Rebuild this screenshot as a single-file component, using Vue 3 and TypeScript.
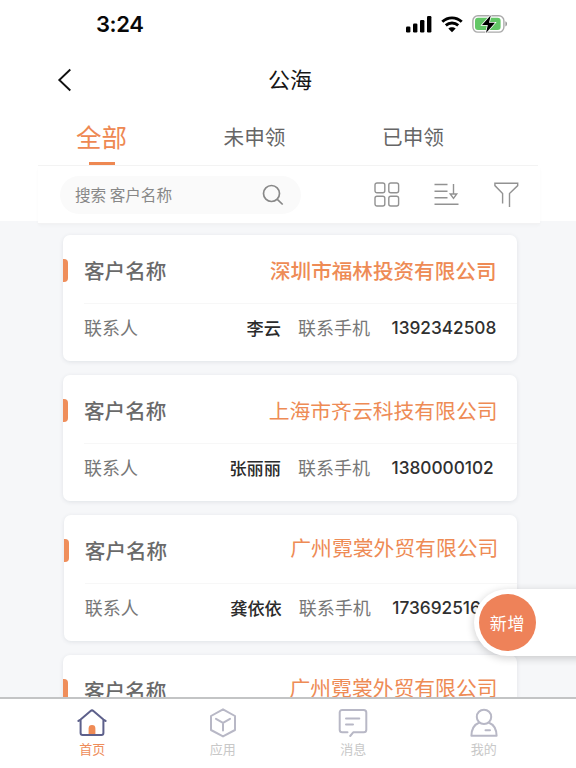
<script setup lang="ts">
import { ref } from 'vue'

interface Customer {
  id: number
  company: string
  contact?: string
  phone?: string
  variant: string
}

const tabs = ['全部', '未申领', '已申领']
const activeTab = ref(0)

const customers: Customer[] = [
  { id: 1, company: '深圳市福林投资有限公司', contact: '李云', phone: '1392342508', variant: 'strong' },
  { id: 2, company: '上海市齐云科技有限公司', contact: '张丽丽', phone: '1380000102', variant: 'medium' },
  { id: 3, company: '广州霓裳外贸有限公司', contact: '龚依依', phone: '173692516', variant: 'raised shifted' },
  { id: 4, company: '广州霓裳外贸有限公司', variant: 'raised' },
]
</script>

<template>
  <div class="screen">
    <header class="status">
      <span class="time">3:24</span>
      <div class="indicators">
        <svg class="signal" width="26" height="17" viewBox="0 0 26 17">
          <rect x="0" y="10.5" width="4.4" height="6" rx="1.2" />
          <rect x="7" y="7.5" width="4.4" height="9" rx="1.2" />
          <rect x="14" y="4" width="4.4" height="12.5" rx="1.2" />
          <rect x="21" y="0" width="4.4" height="16.5" rx="1.2" />
        </svg>
        <svg class="wifi" width="22" height="17" viewBox="0 0 22 17">
          <path d="M1.3 5.8C6.8.5 15.2.5 20.7 5.8" />
          <path d="M4.8 9.4c3.6-3.2 8.8-3.2 12.4 0" />
          <path class="dot" d="M7.3 12.5c2-1.8 5.4-1.8 7.4 0L11 16.3z" />
        </svg>
        <svg class="battery" width="36" height="20" viewBox="0 0 36 20">
          <rect class="shell" x=".9" y="1.7" width="31" height="16.4" rx="5" />
          <rect class="charge" x="3" y="3.8" width="25.6" height="12.2" rx="3" />
          <path class="cap" d="M33.4 7.3c2.2.8 2.2 4.4 0 5.2z" />
          <path class="bolt" d="M18.8 1.2 10 11h5.8l-1.8 8L23 8.7h-6z" />
        </svg>
      </div>
    </header>

    <div class="titlebar">
      <svg class="back" width="16" height="24" viewBox="0 0 16 24"><path d="M14.3 1.5 3.3 12l11 10.5" /></svg>
      <h1>公海</h1>
    </div>

    <div class="head">
      <nav class="tabs">
        <button v-for="(tab, i) in tabs" :key="tab" :class="{ active: i === activeTab }" @click="activeTab = i">
          {{ tab }}
        </button>
      </nav>
      <div class="tools">
        <div class="search">
          <span>搜索 客户名称</span>
          <svg width="22" height="22" viewBox="0 0 22 22"><circle cx="9.5" cy="9.5" r="8" /><path d="m15.3 15.3 5.4 5.2" /></svg>
        </div>
        <svg class="grid" width="26" height="26" viewBox="0 0 26 26">
          <rect x="1" y="1" width="9.8" height="9.8" rx="2" />
          <rect x="14.8" y="1" width="9.8" height="9.8" rx="2" />
          <rect x="1" y="14.2" width="9.8" height="9.8" rx="2" />
          <rect x="14.8" y="14.2" width="9.8" height="9.8" rx="2" />
        </svg>
        <svg class="sort" width="26" height="26" viewBox="0 0 26 26">
          <path d="M.5 2.5h13M.5 9.200h13M.5 15.800h13M.5 22.300h24M19.500 2v10M16.300 12l3.200 4.400 3.200-4.400z" />
        </svg>
        <svg class="filter" width="26" height="26" viewBox="0 0 26 26">
          <path d="M8.600 21.500v-10L.900 3.600V1.200h22.800v2.400l-8.200 7.900V25" />
        </svg>
      </div>
    </div>

    <main class="list">
      <article v-for="c in customers" :key="c.id" class="card" :class="c.variant">
        <div class="row name">
          <i class="mark"></i>
          <span class="caption">客户名称</span>
          <strong class="company">{{ c.company }}</strong>
        </div>
        <div v-if="c.contact" class="row info">
          <span class="label person">联系人</span>
          <span class="contact">{{ c.contact }}</span>
          <span class="label">联系手机</span>
          <span class="phone">{{ c.phone }}</span>
        </div>
      </article>
    </main>

    <div class="drawer"><button class="add">新增</button></div>

    <footer class="bottom">
      <a class="on">
        <svg width="30" height="30" viewBox="0 0 30 30">
          <path class="door" d="M11.600 26v-5.600q0-3.400 3.400-3.400t3.400 3.400V26z" />
          <path class="house" d="M1.400 12.900 3.600 11.600 13.600 3q1.400-1.200 2.800 0l10 8.600 2.200 1.300M3.600 11.800V25q0 2 2 2h18.800q2 0 2-2V11.800" />
        </svg>
        <span>首页</span>
      </a>
      <a>
        <svg width="30" height="30" viewBox="0 0 30 30">
          <path d="M15 1.300 27 8v14L15 28.400 3 22V8zM8 10.800l7 4 7-4M15 14.800v7.600" />
        </svg>
        <span>应用</span>
      </a>
      <a>
        <svg width="30" height="30" viewBox="0 0 30 30">
          <path d="M9.500 24.300H4.300q-2.600 0-2.600-2.600V4.600Q1.700 2 4.300 2h21.400q2.600 0 2.600 2.600v17.100q0 2.600-2.600 2.600h-10.500l-3 3.700M8 10.600h13.300M8 16.600h7" />
        </svg>
        <span>消息</span>
      </a>
      <a>
        <svg width="30" height="30" viewBox="0 0 30 30">
          <circle cx="15" cy="8.900" r="7.200" />
          <path d="M10 14.800C5 16.700 2.600 20.700 2.400 27.800h25.200C27.400 20.700 25 16.700 20 14.800M16.500 22.300h4.500" />
        </svg>
        <span>我的</span>
      </a>
    </footer>
  </div>
</template>

<style>
body {
  background: #fff;
}
</style>

<style scoped>
.screen {
  position: relative;
  display: flex;
  flex-direction: column;
  width: 576px;
  height: 768px;
  overflow: hidden;
  background: #f6f7f9;
  font-family: 'Noto Sans CJK SC', sans-serif;
  box-sizing: border-box;
}
.screen *,
.screen *::after {
  box-sizing: border-box;
}
svg {
  flex: none;
  fill: none;
  stroke: #929292;
  stroke-width: 1.4;
}
button {
  border: 0;
  padding: 0;
  background: none;
  font-family: inherit;
}
.status {
  height: 48px;
  padding: 0 68px 0 96px;
  display: flex;
  justify-content: space-between;
  align-items: center;
  background: #fff;
}
.time {
  font: 600 22px/28px Inter, sans-serif;
  letter-spacing: -0.4px;
  color: #080808;
}
.indicators {
  display: flex;
  align-items: center;
  gap: 9px;
}
.signal {
  fill: #000;
  stroke: none;
}
.wifi {
  stroke: #000;
  stroke-width: 2.9;
}
.wifi .dot {
  fill: #000;
  stroke: none;
}
.battery .shell {
  stroke: #aaa;
}
.battery .charge {
  fill: #62c766;
  stroke: none;
}
.battery .cap {
  fill: #999;
  stroke: none;
}
.battery .bolt {
  fill: #000;
  stroke: #fff;
  stroke-width: 1.5;
  paint-order: stroke;
}
.titlebar {
  height: 64px;
  display: flex;
  align-items: center;
  padding-left: 56px;
  background: #fff;
}
.back {
  stroke: #111;
  stroke-width: 1.9;
}
h1 {
  margin: 0 0 4px 196px;
  font-size: 22px;
  line-height: 32px;
  font-weight: 400;
  color: #151515;
}
.head {
  height: 109px;
  padding: 0 38px;
  flex: none;
  background: #fff;
}
.tabs {
  height: 54px;
  display: flex;
  border-bottom: 1px solid #f3f3f3;
}
.tabs button {
  position: relative;
  margin-top: -6px;
  font-size: 20.6px;
  color: #666;
}
.tabs button:first-child {
  width: 127px;
}
.tabs button:nth-child(2) {
  width: 179px;
}
.tabs button:nth-child(3) {
  width: 138px;
}
.tabs .active {
  font-size: 25.5px;
  color: #ee8852;
}
.tabs .active::after {
  content: '';
  position: absolute;
  left: 51px;
  bottom: 0;
  width: 26px;
  height: 3px;
  background: #ee8852;
}
.tools {
  width: 502px;
  height: 58px;
  display: flex;
  align-items: center;
  padding: 1px 0 0 22px;
  background: #fff;
  border-bottom: 1px solid #f2f2f3;
  box-shadow: 0 2px 3px rgba(0, 0, 0, 0.025);
}
.search {
  width: 241px;
  height: 38px;
  padding: 0 17px 0 15px;
  display: flex;
  align-items: center;
  justify-content: space-between;
  border-radius: 19px;
  background: #fafafa;
  font-size: 15.6px;
  color: #888;
}
.search span {
  margin-top: -3px;
}
.search svg {
  stroke: #888;
  stroke-width: 1.7;
}
.grid {
  margin-left: 73px;
}
.sort {
  margin-left: 34px;
}
.filter {
  margin-left: 34px;
}
.list {
  flex: 1;
  min-height: 0;
  overflow: hidden;
  padding: 14px 59px 0 63px;
}
.card {
  width: 453.5px;
  height: 126px;
  margin-bottom: 14px;
  padding-left: 21px;
  border-radius: 7px;
  background: #fff;
  box-shadow: 0 1px 4px rgba(50, 60, 80, 0.11);
}
.shifted {
  margin-left: 0.8px;
}
.row {
  display: flex;
  align-items: center;
}
.name {
  position: relative;
  height: 69px;
  padding: 1px 20px 0 0;
  justify-content: space-between;
  border-bottom: 1px solid #f7f7f7;
}
.mark {
  position: absolute;
  left: -21px;
  top: 24px;
  width: 5px;
  height: 23px;
  border-radius: 0 4px 4px 0;
  background: #ef8e5b;
}
.caption,
.company {
  font-size: 20.6px;
  line-height: 30px;
  font-weight: 500;
}
.caption {
  color: #6a6a6a;
}
.company {
  color: #ee8b55;
}
.medium .company,
.raised .company {
  font-weight: 400;
  font-size: 20.8px;
  margin-right: -1px;
}
.raised .company {
  margin-top: -6px;
}
.info {
  height: 48px;
}
.info .label,
.contact {
  margin-top: -2px;
}
.label {
  font-size: 18px;
  color: #777;
}
.person {
  width: 72px;
}
.contact {
  width: 125px;
  margin-right: 17px;
  text-align: right;
  font-size: 17.2px;
  font-weight: 500;
  color: #2b2b2b;
}
.phone {
  width: 106px;
  margin-left: 21.5px;
  white-space: nowrap;
  font: 500 17.3px/26px Inter, sans-serif;
  letter-spacing: -0.03px;
  color: #303030;
}
.drawer {
  position: absolute;
  left: 474px;
  top: 589px;
  width: 110px;
  height: 67px;
  display: flex;
  align-items: center;
  padding-left: 5px;
  border-radius: 34px 0 0 34px;
  background: #fff;
  box-shadow: 0 2px 9px rgba(0, 0, 0, 0.2);
}
.add {
  width: 57px;
  height: 57px;
  border-radius: 50%;
  background: #ee8259;
  color: #fff;
  font-size: 17px;
  letter-spacing: 0.8px;
}
.bottom {
  flex: none;
  height: 71px;
  padding: 0 27px;
  display: flex;
  border-top: 2px solid #c3c4c5;
  background: #fff;
}
.bottom a {
  width: 130.6px;
  padding-top: 9px;
  display: flex;
  flex-direction: column;
  align-items: center;
  font-size: 13px;
  line-height: 22px;
  color: #c8c8c8;
}
.bottom svg {
  stroke: #b8b8c6;
  stroke-width: 2;
  stroke-linecap: round;
  stroke-linejoin: round;
}
.bottom .house {
  stroke: #5d608b;
}
.bottom .door {
  fill: #ef8b55;
  stroke: none;
}
.bottom .on {
  color: #ee8d5b;
}
</style>
